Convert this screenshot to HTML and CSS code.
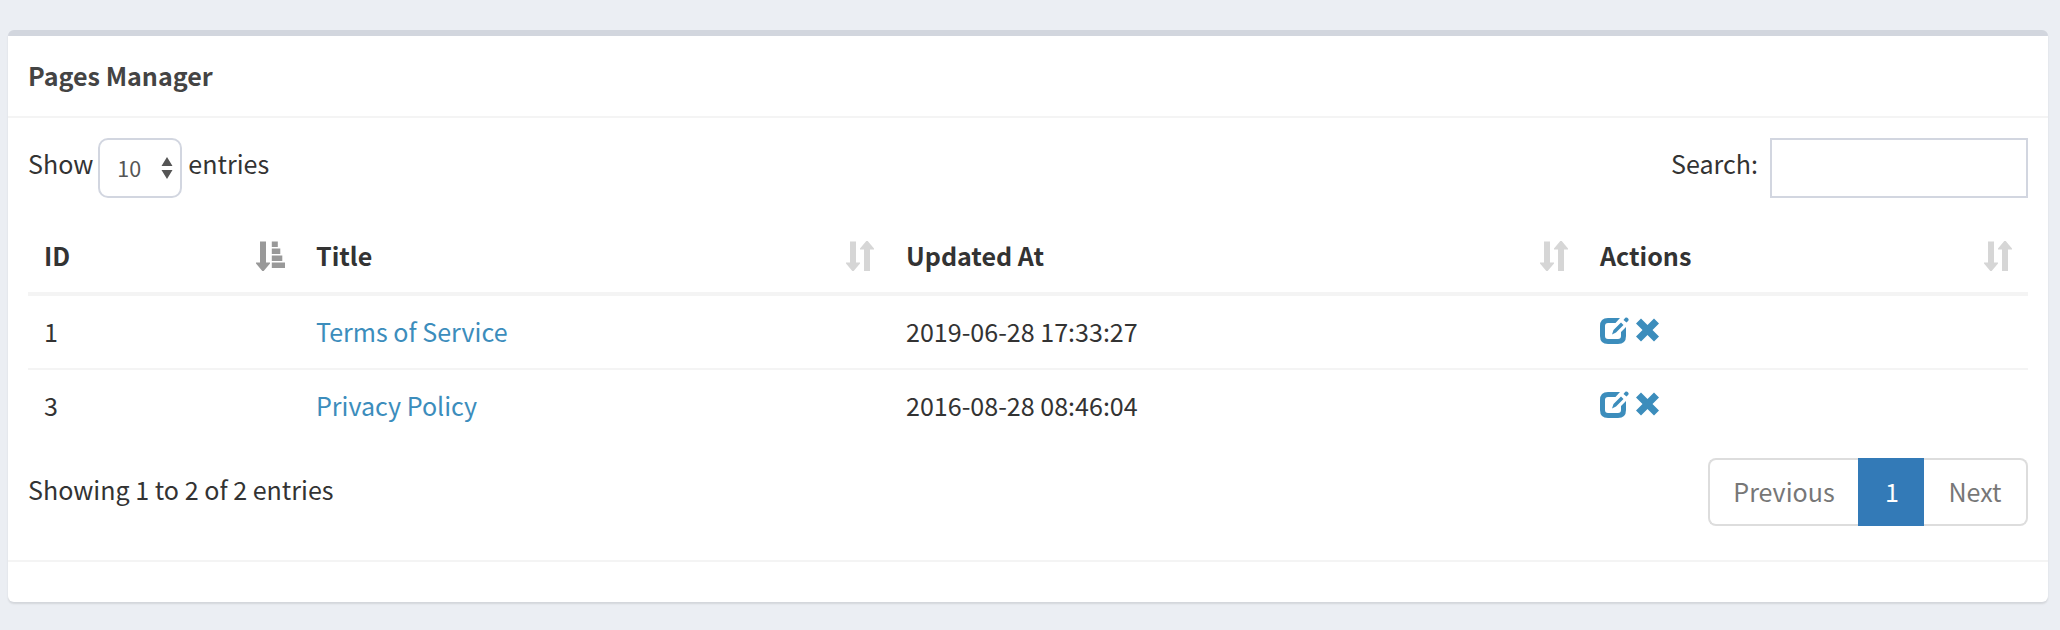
FILE: index.html
```html
<!DOCTYPE html>
<html lang="en">
<head>
<meta charset="utf-8">
<title>Pages Manager</title>
<link rel="stylesheet" href="styles.css">
</head>
<body>
<svg class="sprite" aria-hidden="true">
  <symbol id="sort" viewBox="0 0 30 30"><path d="M4 .5h6v21h4v1L7.700 30H6.300L0 22.500v-1h4zM18 30V8.500h-4v-1L20.300 0h1.400L28 7.500v1h-4V30z"/></symbol>
  <symbol id="sort-asc" viewBox="0 0 30 30"><path d="M4 .5h6v21h4v1L7.700 30H6.300L0 22.500v-1h4zM15.800.5h6V6h-6zM15.800 7.500h8.500V13h-8.500zM15.800 14.500h10.500V20H15.800zM15.800 21.500H29V27H15.800z"/></symbol>
  <symbol id="edit" viewBox="0 0 30 28"><path d="M20 1H8Q0 1 0 9v10q0 8 8 8h10q8 0 8-8V10l-5 5v4q0 3-3 3H8q-3 0-3-3V9q0-3 3-3h7.500zM12 17.500l1.500-4.500L21 5.500l2.500 2.500L16 15.500zM23.500 3L25.300.8q1-.8 2 0l1 1q.8 1 0 2L26.500 5.500z"/></symbol>
  <symbol id="remove" viewBox="0 0 24 24"><path d="M5 .5L11.500 7 18 .5 23 5.500 16.500 12 23 18.500 18 23.500 11.500 17 5 23.500 0 18.500 6.500 12 0 5.500z"/></symbol>
</svg>
<section class="box">
  <header class="box-header"><h3 class="box-title">Pages Manager</h3></header>
  <div class="box-body">
    <div class="toolbar">
      <div class="length"><span class="label">Show</span><span class="select">10<svg class="caret" viewBox="0 0 12 22"><path d="M6 0l5.500 9H.5zM.5 13h11L6 22z"/></svg></span><span class="label">entries</span></div>
      <label class="filter"><span class="label">Search:</span><input class="search" type="search"></label>
    </div>
    <table class="table">
      <colgroup><col class="col-id"><col class="col-title"><col class="col-date"><col></colgroup>
      <thead><tr>
        <th><div class="head">ID<svg class="sort active"><use href="#sort-asc"/></svg></div></th>
        <th><div class="head">Title<svg class="sort"><use href="#sort"/></svg></div></th>
        <th><div class="head">Updated At<svg class="sort"><use href="#sort"/></svg></div></th>
        <th><div class="head">Actions<svg class="sort"><use href="#sort"/></svg></div></th>
      </tr></thead>
      <tbody>
        <tr><td>1</td><td><a class="link">Terms of Service</a></td><td>2019-06-28 17:33:27</td><td><div class="actions"><svg class="edit"><use href="#edit"/></svg><svg class="remove"><use href="#remove"/></svg></div></td></tr>
        <tr><td>3</td><td><a class="link">Privacy Policy</a></td><td>2016-08-28 08:46:04</td><td><div class="actions"><svg class="edit"><use href="#edit"/></svg><svg class="remove"><use href="#remove"/></svg></div></td></tr>
      </tbody>
    </table>
    <div class="bottom">
      <div class="info">Showing 1 to 2 of 2 entries</div>
      <nav class="pagination"><a class="page previous">Previous</a><a class="page current">1</a><a class="page next">Next</a></nav>
    </div>
  </div>
  <footer class="box-footer"></footer>
</section>
</body>
</html>
```
FILE: styles.css
```css
* { box-sizing: border-box; }
body {
  margin: 0;
  padding: 30px 12px 0 8px;
  height: 630px;
  overflow: hidden;
  background: #ebeef3;
  color: #333;
  font: 25.07px/40px "Noto Sans CJK SC", "Open Sans", sans-serif;
}
svg { display: block; fill: currentColor; }
.sprite { display: none; }
.box {
  height: 572px;
  border-top: 6px solid #d2d6de;
  border-radius: 6px;
  background: #fff;
  box-shadow: 0 2px 2px rgba(0, 0, 0, .1);
}
.box-header { height: 82px; padding: 19px 20px 0; border-bottom: 2px solid #f4f4f4; }
.box-title { margin: 0; color: #444; font-size: inherit; font-weight: 700; }
.box-body { height: 442px; padding: 20px; }
.toolbar { display: flex; justify-content: space-between; height: 82px; }
.length, .filter { display: flex; align-items: flex-start; }
.label { padding-top: 5px; }
.select {
  display: flex;
  justify-content: space-between;
  width: 84px;
  height: 60px;
  margin: 0 6px 0 5px;
  padding: 8px 7px 0 17px;
  border: 2px solid #d2d6e0;
  border-radius: 10px;
  color: #555;
  font-size: 21.5px;
}
.caret { width: 12px; height: 22px; margin-top: 9px; }
.search {
  width: 258px;
  height: 60px;
  margin: 0 0 0 12px;
  padding: 0 12px;
  border: 2px solid #d2d6e0;
  background: #fff;
  font: inherit;
}
.table { width: 2000px; table-layout: fixed; border-collapse: separate; border-spacing: 0; }
.col-id { width: 272px; }
.col-title { width: 590px; }
.col-date { width: 694px; }
.table th { height: 76px; padding: 15px 16px 17px; border-bottom: 4px solid #f4f4f4; text-align: left; font-weight: 700; }
.head { display: flex; justify-content: space-between; height: 40px; }
.sort { width: 30px; height: 30px; margin: 6px -2px 0 0; color: #d6d6d6; }
.sort.active { color: #999; }
.table td { height: 72px; padding: 15px 16px 17px; }
.table tr + tr td { height: 74px; border-top: 2px solid #f4f4f4; }
.link { color: #3c8dbc; }
.actions { display: flex; gap: 6px; height: 40px; padding-top: 6px; color: #3c8dbc; }
.edit { width: 30px; height: 28px; }
.remove { width: 24px; height: 24px; margin-top: 1px; }
.bottom { display: flex; justify-content: space-between; padding-top: 16px; }
.info { padding-top: 11px; }
.pagination { display: flex; height: 68px; }
.page { padding-top: 11px; border: 2px solid #ddd; color: #777; text-align: center; }
.previous { width: 150px; border-right: 0; border-radius: 8px 0 0 8px; }
.current { width: 66px; padding-left: 2px; border-color: #337ab7; background: #337ab7; color: #fff; }
.next { width: 104px; border-left: 0; border-radius: 0 8px 8px 0; }
.box-footer { height: 42px; border-top: 2px solid #f4f4f4; }
```
